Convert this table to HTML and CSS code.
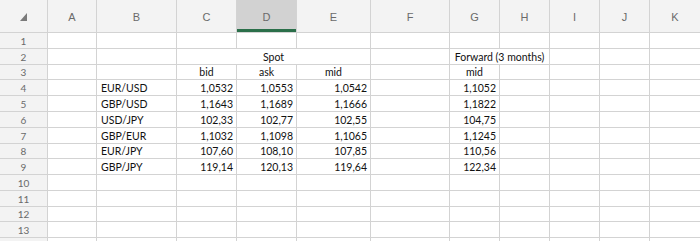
FILE: index.html
```html
<!DOCTYPE html>
<html>
<head>
<meta charset="utf-8">
<link rel="stylesheet" href="styles.css">
</head>
<body>
<div class="sheet">
  <div class="hd corner"><span class="tri"></span></div>
  <div class="hd">A</div><div class="hd">B</div><div class="hd">C</div>
  <div class="hd sel">D</div><div class="hd">E</div><div class="hd">F</div>
  <div class="hd">G</div><div class="hd">H</div><div class="hd">I</div>
  <div class="hd">J</div><div class="hd">K</div>

  <div class="rh">1</div>
  <div class="c"></div><div class="c"></div><div class="c"></div><div class="c"></div><div class="c"></div><div class="c"></div><div class="c"></div><div class="c"></div><div class="c"></div><div class="c"></div><div class="c"></div>

  <div class="rh">2</div>
  <div class="c"></div><div class="c"></div>
  <div class="c ctr span3">Spot</div>
  <div class="c"></div>
  <div class="c ctr span2">Forward (3 months)</div>
  <div class="c"></div><div class="c"></div><div class="c"></div>

  <div class="rh">3</div>
  <div class="c"></div><div class="c"></div>
  <div class="c ctr">bid</div><div class="c ctr">ask</div><div class="c ctr">mid</div>
  <div class="c"></div><div class="c ctr">mid</div>
  <div class="c"></div><div class="c"></div><div class="c"></div><div class="c"></div>

  <div class="rh">4</div>
  <div class="c"></div><div class="c">EUR/USD</div>
  <div class="c r">1,0532</div><div class="c r">1,0553</div><div class="c r">1,0542</div>
  <div class="c"></div><div class="c r">1,1052</div>
  <div class="c"></div><div class="c"></div><div class="c"></div><div class="c"></div>

  <div class="rh">5</div>
  <div class="c"></div><div class="c">GBP/USD</div>
  <div class="c r">1,1643</div><div class="c r">1,1689</div><div class="c r">1,1666</div>
  <div class="c"></div><div class="c r">1,1822</div>
  <div class="c"></div><div class="c"></div><div class="c"></div><div class="c"></div>

  <div class="rh">6</div>
  <div class="c"></div><div class="c">USD/JPY</div>
  <div class="c r">102,33</div><div class="c r">102,77</div><div class="c r">102,55</div>
  <div class="c"></div><div class="c r">104,75</div>
  <div class="c"></div><div class="c"></div><div class="c"></div><div class="c"></div>

  <div class="rh">7</div>
  <div class="c"></div><div class="c">GBP/EUR</div>
  <div class="c r">1,1032</div><div class="c r">1,1098</div><div class="c r">1,1065</div>
  <div class="c"></div><div class="c r">1,1245</div>
  <div class="c"></div><div class="c"></div><div class="c"></div><div class="c"></div>

  <div class="rh">8</div>
  <div class="c"></div><div class="c">EUR/JPY</div>
  <div class="c r">107,60</div><div class="c r">108,10</div><div class="c r">107,85</div>
  <div class="c"></div><div class="c r">110,56</div>
  <div class="c"></div><div class="c"></div><div class="c"></div><div class="c"></div>

  <div class="rh">9</div>
  <div class="c"></div><div class="c">GBP/JPY</div>
  <div class="c r">119,14</div><div class="c r">120,13</div><div class="c r">119,64</div>
  <div class="c"></div><div class="c r">122,34</div>
  <div class="c"></div><div class="c"></div><div class="c"></div><div class="c"></div>

  <div class="rh">10</div>
  <div class="c"></div><div class="c"></div><div class="c"></div><div class="c"></div><div class="c"></div><div class="c"></div><div class="c"></div><div class="c"></div><div class="c"></div><div class="c"></div><div class="c"></div>

  <div class="rh">11</div>
  <div class="c"></div><div class="c"></div><div class="c"></div><div class="c"></div><div class="c"></div><div class="c"></div><div class="c"></div><div class="c"></div><div class="c"></div><div class="c"></div><div class="c"></div>

  <div class="rh">12</div>
  <div class="c"></div><div class="c"></div><div class="c"></div><div class="c"></div><div class="c"></div><div class="c"></div><div class="c"></div><div class="c"></div><div class="c"></div><div class="c"></div><div class="c"></div>

  <div class="rh">13</div>
  <div class="c"></div><div class="c"></div><div class="c"></div><div class="c"></div><div class="c"></div><div class="c"></div><div class="c"></div><div class="c"></div><div class="c"></div><div class="c"></div><div class="c"></div>

  <div class="rh"></div>
  <div class="c"></div><div class="c"></div><div class="c"></div><div class="c"></div><div class="c"></div><div class="c"></div><div class="c"></div><div class="c"></div><div class="c"></div><div class="c"></div><div class="c"></div>
</div>
</body>
</html>
```
FILE: styles.css
```css
html, body {
  margin: 0;
  padding: 0;
  background: #ffffff;
  overflow: hidden;
}

.sheet {
  display: grid;
  grid-template-columns: 47px 48px 79px 59px 59px 73px 78px 49px 49px 49px 49px 50px;
  grid-template-rows: 32px 15px 15px 14px 15px 15px 15px 15px 14px 15px 15px 15px 14px 15px 15px;
  gap: 1px;
  background: #d3d3d3;
  width: 700px;
  height: 241px;
  overflow: hidden;
  font-family: "Lato", "Open Sans", sans-serif;
  font-size: 10.5px;
  color: #111111;
}

.hd {
  background: #f3f3f3;
  color: #6a6a6a;
  font-family: "Liberation Sans", sans-serif;
  font-size: 11px;
  display: flex;
  align-items: center;
  justify-content: center;
  padding-top: 2px;
  box-sizing: border-box;
}

.hd.sel {
  background: #d2d2d2;
  border-bottom: 3px solid #2b6f4a;
  padding-top: 5px;
}

.corner {
  position: relative;
}

.tri {
  position: absolute;
  left: 20px;
  top: 13px;
  width: 0;
  height: 0;
  border-left: 7px solid transparent;
  border-bottom: 8px solid #7a7a7a;
}

.rh {
  background: #f3f3f3;
  color: #6a6a6a;
  font-family: "Lato", "Open Sans", sans-serif;
  font-size: 10px;
  display: flex;
  align-items: flex-end;
  justify-content: center;
  line-height: 13px;
}

.c {
  background: #ffffff;
  display: flex;
  align-items: flex-end;
  padding: 0 4px 0 4px;
  line-height: 14px;
  white-space: nowrap;
  overflow: visible;
}

.r {
  justify-content: flex-end;
  padding-right: 3px;
}

.ctr {
  justify-content: center;
}

.span3 {
  grid-column: span 3;
}

.span2 {
  grid-column: span 2;
}
```
